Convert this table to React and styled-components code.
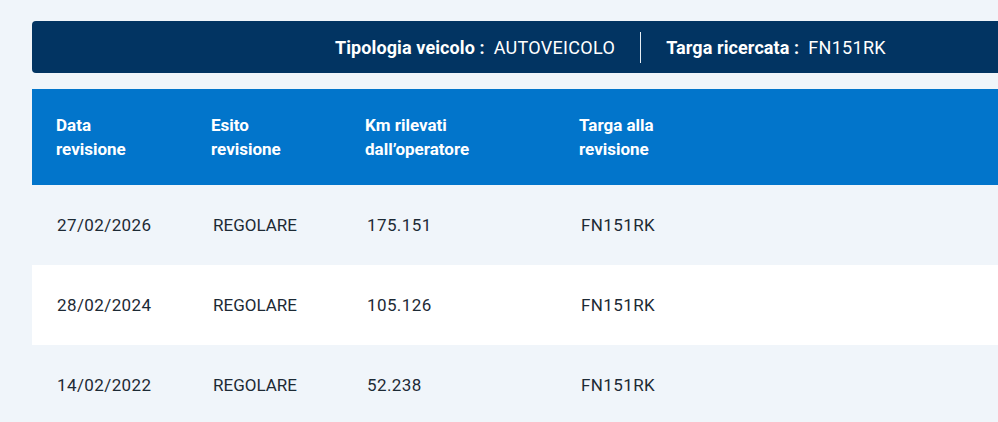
import styled, { createGlobalStyle } from "styled-components"

const GlobalStyle = createGlobalStyle`
  html, body {
    margin: 0;
    padding: 0;
    background: #f0f5fa;
    overflow: hidden;
  }
  body {
    font-family: Roboto, "Liberation Sans", sans-serif;
  }
`

const Page = styled.div`
  padding: 21px 0 0 32px;
  width: 966px;
`

const InfoBar = styled.div`
  display: flex;
  align-items: center;
  height: 52px;
  padding-left: 303px;
  background: #023462;
  border-radius: 4px 0 0 4px;
  color: #fff;
  font-size: 18px;
`

const InfoItem = styled.div`
  display: flex;
  align-items: center;
  gap: 9px;
  white-space: nowrap;
`

const InfoLabel = styled.span`
  font-weight: 700;
  letter-spacing: 0.1px;
`

const InfoValue = styled.span`
  font-weight: 400;
  letter-spacing: 0.3px;
`

const Divider = styled.span`
  width: 1px;
  height: 31px;
  background: #e6edf3;
  margin: 0 25px;
`

const Table = styled.div`
  margin-top: 16px;
`

const Columns = styled.div`
  display: grid;
  grid-template-columns: 155px 154px 214px 1fr;
  padding-left: 24px;
`

const HeadRow = styled(Columns)`
  background: #0275cb;
  color: #fff;
  padding-top: 24px;
  padding-bottom: 24px;
`

const HeadCell = styled.div`
  font-size: 17px;
  font-weight: 700;
  line-height: 24px;
`

const Row = styled(Columns)`
  align-items: center;
  height: 80px;
  background: ${(p) => (p.$alt ? "#ffffff" : "#f0f5fa")};
  color: #1d2a35;
`

const Cell = styled.div`
  font-size: 17px;
  letter-spacing: ${(p) => (p.$num ? "0.4px" : "0")};
  padding-left: ${(p) => (p.$shift ? "2px" : "1px")};
`

const rows = [
  { date: "27/02/2026", esito: "REGOLARE", km: "175.151", targa: "FN151RK" },
  { date: "28/02/2024", esito: "REGOLARE", km: "105.126", targa: "FN151RK" },
  { date: "14/02/2022", esito: "REGOLARE", km: "52.238", targa: "FN151RK" },
]

export default function App() {
  return (
    <Page>
      <GlobalStyle />
      <InfoBar>
        <InfoItem>
          <InfoLabel>Tipologia veicolo :</InfoLabel>
          <InfoValue>AUTOVEICOLO</InfoValue>
        </InfoItem>
        <Divider />
        <InfoItem>
          <InfoLabel>Targa ricercata :</InfoLabel>
          <InfoValue>FN151RK</InfoValue>
        </InfoItem>
      </InfoBar>
      <Table>
        <HeadRow>
          <HeadCell>Data<br />revisione</HeadCell>
          <HeadCell>Esito<br />revisione</HeadCell>
          <HeadCell>Km rilevati<br />dall’operatore</HeadCell>
          <HeadCell>Targa alla<br />revisione</HeadCell>
        </HeadRow>
        {rows.map((r, i) => (
          <Row key={r.date} $alt={i % 2 === 1}>
            <Cell $num>{r.date}</Cell>
            <Cell $shift>{r.esito}</Cell>
            <Cell $shift $num>{r.km}</Cell>
            <Cell $shift $num>{r.targa}</Cell>
          </Row>
        ))}
      </Table>
    </Page>
  )
}
